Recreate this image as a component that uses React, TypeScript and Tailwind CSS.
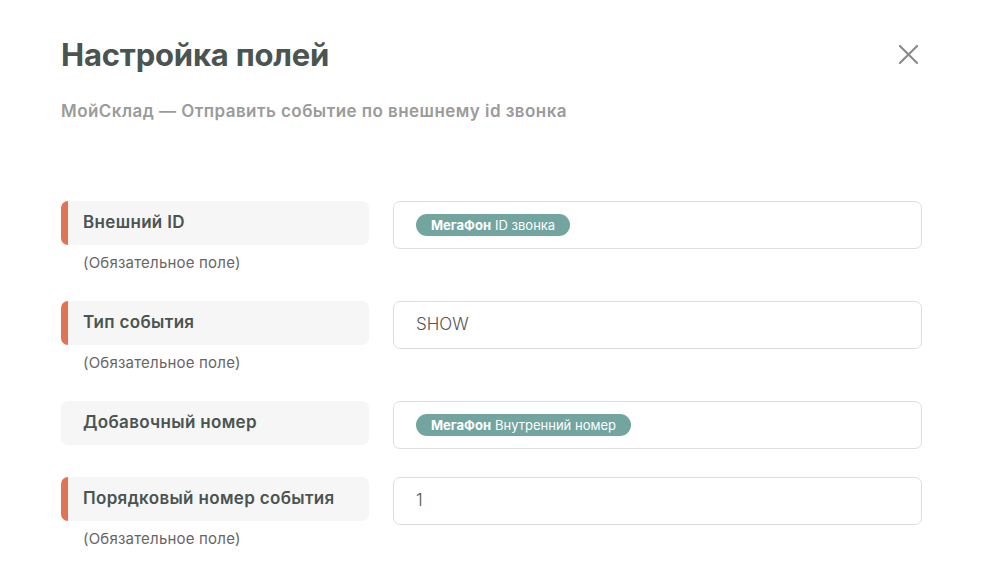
import React from "react";

const font = { fontFamily: "Inter, 'Noto Sans', sans-serif" };

function Chip({ source, field }: { source: string; field: string }) {
  return (
    <span className="inline-flex h-[22px] items-center rounded-full bg-[#72a59f] px-[15px] text-[13px] text-white leading-none">
      <span className="font-bold">{source}</span>
      <span className="ml-[4px] font-normal">{field}</span>
    </span>
  );
}

type Row = {
  label: string;
  required: boolean;
  marked: boolean;
  value: React.ReactNode;
};

const rows: Row[] = [
  { label: "Внешний ID", required: true, marked: true, value: <Chip source="МегаФон" field="ID звонка" /> },
  { label: "Тип события", required: true, marked: true, value: <span className="text-[17px] font-light text-[#555]">SHOW</span> },
  { label: "Добавочный номер", required: false, marked: false, value: <Chip source="МегаФон" field="Внутренний номер" /> },
  { label: "Порядковый номер события", required: true, marked: true, value: <span className="text-[17px] font-light text-[#555]">1</span> },
];

export default function App() {
  return (
    <div className="min-h-[567px] w-[990px] bg-white" style={font}>
      <div className="pl-[61px] pr-[68px] pt-[34px]">
        <div className="flex items-start justify-between">
          <h1 className="text-[31px] font-bold leading-[42px] tracking-[-0.2px] text-[#4a5451]">Настройка полей</h1>
          <button className="mt-[6px] flex h-[28px] w-[28px] items-center justify-center text-[#8a8a8a]">
            <svg width="21" height="21" viewBox="0 0 22 22" fill="none" stroke="currentColor" strokeWidth="2.2" strokeLinecap="round">
              <path d="M2 2L20 20M20 2L2 20" />
            </svg>
          </button>
        </div>
        <div className="mt-[24px] text-[17px] font-semibold leading-[22px] tracking-[0.45px] text-[#9b9b9b]">
          МойСклад — Отправить событие по внешнему id звонка
        </div>
        <div className="mt-[79px] flex flex-col gap-[28px]">
          {rows.map((r) => (
            <div key={r.label} className="flex gap-[24px]">
              <div className="w-[308px] shrink-0">
                <div className="relative flex h-[44px] items-center overflow-hidden rounded-[7px] bg-[#f6f6f6] pl-[22px]">
                  {r.marked && <div className="absolute left-0 top-0 h-full w-[7px] bg-[#e07556]" />}
                  <span className="text-[17px] font-semibold tracking-[0.33px] text-[#4a5451]">{r.label}</span>
                </div>
                {r.required && (
                  <div className="mt-[8px] pl-[22px] text-[15px] leading-[20px] tracking-[0.2px] text-[#666]">(Обязательное поле)</div>
                )}
              </div>
              <div className="flex h-[48px] flex-1 items-center rounded-[7px] border border-[#dedede] pl-[22px]">
                {r.value}
              </div>
            </div>
          ))}
        </div>
      </div>
    </div>
  );
}
